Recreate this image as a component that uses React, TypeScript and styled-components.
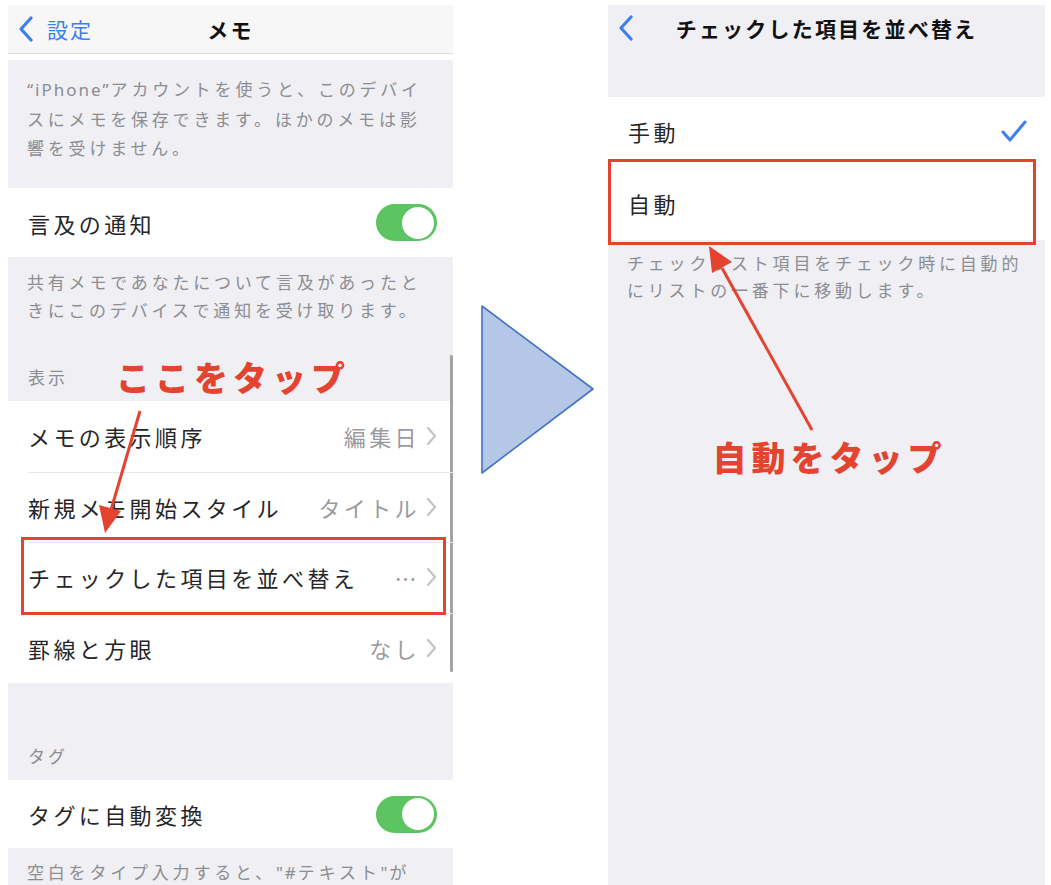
import React from 'react';
import styled, {createGlobalStyle} from 'styled-components';

const GlobalStyle = createGlobalStyle`
  html, body {
    margin: 0;
    padding: 0;
    background: #ffffff;
    font-family: "Noto Sans CJK JP", "Noto Sans", sans-serif;
  }
`;

const Page = styled.div`
  position: relative;
  display: flex;
  width: 1051px;
  height: 885px;
  padding: 5px 6px 0 8px;
  box-sizing: border-box;
  overflow: hidden;
`;

// iOS settings screen
const Screen = styled.div<{ $width: number }>`
  position: relative;
  display: flex;
  flex-direction: column;
  width: ${p => p.$width}px;
  flex-shrink: 0;
  background: #efeff4;
  overflow: hidden;

  & > * {
    flex-shrink: 0;
  }
`;

const NavBar = styled.div<{ $plain?: boolean }>`
  position: relative;
  display: flex;
  align-items: center;
  justify-content: center;
  height: ${p => (p.$plain ? 45 : 48)}px;
  background: ${p => (p.$plain ? '#efeff4' : '#f7f7f8')};
  border-bottom: ${p => (p.$plain ? 'none' : '1px solid #dcdcdf')};
`;

const NavBack = styled.div`
  position: absolute;
  left: 10px;
  top: 0;
  bottom: 0;
  display: flex;
  align-items: center;
  gap: 13px;
  color: #3d7ef0;
  font-size: 21px;
  letter-spacing: 2px;
`;

const NavTitle = styled.div`
  font-size: 21px;
  font-weight: 700;
  color: #111;
  letter-spacing: 2.2px;
`;

const NavGap = styled.div<{ $height: number; $white?: boolean }>`
  height: ${p => p.$height}px;
  background: ${p => (p.$white ? '#ffffff' : 'transparent')};
`;

// explanatory text under a group, broken into lines the way iOS wraps it
const GroupFooter = styled.div<{ $top: number; $bottom: number; $lh?: number }>`
  padding: ${p => p.$top}px 0 ${p => p.$bottom}px 19px;
  font-size: 17px;
  line-height: ${p => p.$lh ?? 28}px;
  letter-spacing: 3.8px;
  color: #8d8d92;
  white-space: nowrap;
`;

// latin words inside Japanese text use the latin face and lighter tracking
const Latin = styled.span`
  font-family: "Noto Sans", sans-serif;
  letter-spacing: 2px;
`;

const GroupHeader = styled.div<{ $height: number }>`
  display: flex;
  align-items: flex-end;
  gap: 48px;
  height: ${p => p.$height}px;
  padding: 0 20px 12px 20px;
  box-sizing: border-box;
  font-size: 17px;
  letter-spacing: 3px;
  color: #8d8d92;
`;

const Callout = styled.span`
  font-size: 34px;
  font-weight: 900;
  letter-spacing: 5px;
  color: #e4432f;
  line-height: 40px;
  margin-bottom: -8px;
`;

const Group = styled.div`
  background: #ffffff;
`;

const Row = styled.div<{ $height: number; $divider?: boolean }>`
  position: relative;
  display: flex;
  align-items: center;
  height: ${p => p.$height}px;
  padding: 0 16px 0 20px;
  box-sizing: border-box;

  ${p =>
    p.$divider &&
    `&::after {
      content: '';
      position: absolute;
      left: 20px;
      right: 0;
      bottom: -1px;
      height: 1px;
      background: #e8e8ec;
      z-index: 1;
    }`}
`;

const RowLabel = styled.span`
  flex: 1;
  font-size: 22px;
  letter-spacing: 3.4px;
  color: #262628;
  white-space: nowrap;
`;

const RowValue = styled.span`
  font-size: 22px;
  letter-spacing: 3.4px;
  color: #9a9a9f;
  margin-right: 6px;
  white-space: nowrap;
`;

const Chevron = styled.svg`
  width: 11px;
  height: 20px;
  flex-shrink: 0;
`;

const Toggle = styled.div`
  position: relative;
  width: 61px;
  height: 37px;
  border-radius: 19px;
  background: #5cc461;

  &::after {
    content: '';
    position: absolute;
    right: 3px;
    top: 2.5px;
    width: 32px;
    height: 32px;
    border-radius: 50%;
    background: #ffffff;
  }
`;

// red frame drawn over the row that should be tapped
const TapFrame = styled.div<{ $top: number; $right: number; $bottom: number; $left: number }>`
  position: absolute;
  top: ${p => p.$top}px;
  right: ${p => p.$right}px;
  bottom: ${p => p.$bottom}px;
  left: ${p => p.$left}px;
  border: 3px solid #e4432f;
  pointer-events: none;
  z-index: 2;
`;

const ScrollBar = styled.div`
  position: absolute;
  right: 0;
  top: 350px;
  width: 3px;
  height: 317px;
  border-radius: 2px;
  background: #a3a3a6;
`;

const Between = styled.div`
  width: 155px;
  flex-shrink: 0;
  padding: 300px 0 0 28px;
  box-sizing: border-box;
`;

const BottomCallout = styled.div`
  display: flex;
  justify-content: center;
  padding: 134px 0 0 6px;
`;

const Overlay = styled.svg`
  position: absolute;
  left: 0;
  top: 0;
  pointer-events: none;
  z-index: 3;
`;

const ChevronRight = () => (
  <Chevron viewBox="0 0 11 20">
    <polyline points="2,2 9,10 2,18" fill="none" stroke="#c3c3c8" strokeWidth="2.2" strokeLinecap="round" strokeLinejoin="round"/>
  </Chevron>
);

const BackArrow = () => (
  <svg width="16" height="26" viewBox="0 0 16 26">
    <polyline points="13,2 3,13 13,24" fill="none" stroke="#3d7ef0" strokeWidth="3.2" strokeLinecap="round" strokeLinejoin="round"/>
  </svg>
);

const ListRow = ({label, value, divider, children}: {
  label: string; value?: string; divider?: boolean; children?: React.ReactNode
}) => (
  <Row $height={70.5} $divider={divider}>
    <RowLabel>{label}</RowLabel>
    {value && <RowValue>{value}</RowValue>}
    <ChevronRight/>
    {children}
  </Row>
);

function App() {
  return (
    <Page>
      <GlobalStyle/>

      {/* Notes settings */}
      <Screen $width={445}>
        <NavBar>
          <NavBack><BackArrow/>設定</NavBack>
          <NavTitle>メモ</NavTitle>
        </NavBar>
        <NavGap $height={6} $white/>
        <GroupFooter $top={14} $bottom={26} $lh={29}>
          <Latin>“iPhone”</Latin>アカウントを使うと、このデバイ<br/>
          スにメモを保存できます。ほかのメモは影<br/>
          響を受けません。
        </GroupFooter>
        <Group>
          <Row $height={69}>
            <RowLabel>言及の通知</RowLabel>
            <Toggle/>
          </Row>
        </Group>
        <GroupFooter $top={11} $bottom={0}>
          共有メモであなたについて言及があったと<br/>
          きにこのデバイスで通知を受け取ります。
        </GroupFooter>
        <GroupHeader $height={77}>
          表示
          <Callout>ここをタップ</Callout>
        </GroupHeader>
        <Group>
          <ListRow label="メモの表示順序" value="編集日" divider/>
          <ListRow label="新規メモ開始スタイル" value="タイトル" divider/>
          <ListRow label="チェックした項目を並べ替え" value="…" divider>
            <TapFrame $top={-5} $right={7} $bottom={-2} $left={13}/>
          </ListRow>
          <ListRow label="罫線と方眼" value="なし"/>
        </Group>
        <GroupHeader $height={97}>タグ</GroupHeader>
        <Group>
          <Row $height={68}>
            <RowLabel>タグに自動変換</RowLabel>
            <Toggle/>
          </Row>
        </Group>
        <GroupFooter $top={10} $bottom={0}>
          空白をタイプ入力すると、<Latin>"#</Latin>テキスト<Latin>"</Latin>が
        </GroupFooter>
        <ScrollBar/>
      </Screen>

      <Between>
        <svg width="114" height="170" viewBox="0 0 114 170">
          <polygon points="1,1 1,168 112,84" fill="#b4c7e7" stroke="#4472c4" strokeWidth="1.6" strokeLinejoin="round"/>
        </svg>
      </Between>

      {/* Sort checked items */}
      <Screen $width={437}>
        <NavBar $plain>
          <NavBack><BackArrow/></NavBack>
          <NavTitle>チェックした項目を並べ替え</NavTitle>
        </NavBar>
        <NavGap $height={47}/>
        <Group>
          <Row $height={68}>
            <RowLabel>手動</RowLabel>
            <svg width="26" height="24" viewBox="0 0 26 24" style={{marginRight: 2}}>
              <polyline points="2,13 9,21 24,3" fill="none" stroke="#3d7ef0" strokeWidth="3" strokeLinecap="round" strokeLinejoin="round"/>
            </svg>
          </Row>
          <Row $height={75}>
            <RowLabel>自動</RowLabel>
            <TapFrame $top={-6} $right={9} $bottom={-5} $left={0}/>
          </Row>
        </Group>
        <GroupFooter $top={9} $bottom={0} $lh={27}>
          チェックリスト項目をチェック時に自動的<br/>
          にリストの一番下に移動します。
        </GroupFooter>
        <BottomCallout>
          <Callout>自動をタップ</Callout>
        </BottomCallout>
      </Screen>

      {/* pointer arrows */}
      <Overlay width="1051" height="885" viewBox="0 0 1051 885">
        <line x1="140" y1="411" x2="111" y2="510" stroke="#e4432f" strokeWidth="3"/>
        <polygon points="105,533 99,505 121,511" fill="#e4432f"/>
        <line x1="812" y1="430" x2="722" y2="268" stroke="#e4432f" strokeWidth="3"/>
        <polygon points="709,246 732,262 712,273" fill="#e4432f"/>
      </Overlay>
    </Page>
  );
}

export default App;
